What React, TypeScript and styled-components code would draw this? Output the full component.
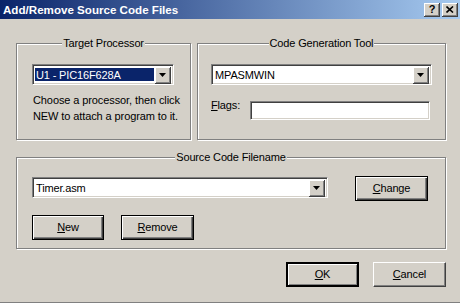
import React from 'react'
import styled, { createGlobalStyle, css } from 'styled-components'

const GlobalStyle = createGlobalStyle`
  html, body {
    margin: 0;
    padding: 0;
    background: #d4d0c8;
  }
  body {
    width: 460px;
    height: 303px;
    overflow: hidden;
    font-family: "Liberation Sans", Arial, sans-serif;
    font-size: 11px;
    color: #000;
  }
`

const Window = styled.div`
  width: 460px;
  height: 303px;
  box-sizing: border-box;
  background: #d4d0c8;
  border-bottom: 1px solid #808080;
  display: flex;
  flex-direction: column;
`

const TitleBar = styled.div`
  height: 19px;
  flex: none;
  display: flex;
  align-items: center;
  justify-content: space-between;
  padding: 0 2px 0 3px;
  background: linear-gradient(to right, #0a246a, #a6caf0);
`

const TitleText = styled.span`
  color: #fff;
  font-weight: bold;
  font-size: 11.6px;
  white-space: nowrap;
`

const TitleButtons = styled.div`
  display: flex;
  gap: 2px;
`

const CaptionButton = styled.div`
  width: 16px;
  height: 14px;
  box-sizing: border-box;
  background: #d4d0c8;
  box-shadow: inset -1px -1px 0 #404040, inset 1px 1px 0 #fff, inset -2px -2px 0 #808080;
  display: flex;
  align-items: center;
  justify-content: center;
  font-weight: bold;
  font-size: 11px;
  line-height: 14px;
  padding-bottom: 1px;
`

const Content = styled.div`
  flex: 1;
  display: flex;
  flex-direction: column;
  padding: 24px 14px 0 16px;
`

const TopRow = styled.div`
  display: grid;
  grid-template-columns: 175px 249px;
  column-gap: 6px;
  height: 97px;
`

const GroupBox = styled.div<{ $height?: number; $top?: number }>`
  box-sizing: border-box;
  border: 1px solid #808080;
  box-shadow: inset 1px 1px 0 #fff, 1px 1px 0 #fff;
  display: flex;
  flex-direction: column;
  margin-top: ${(p) => p.$top || 0}px;
  ${(p) => p.$height && css`height: ${p.$height}px;`}
`

const Caption = styled.span`
  align-self: center;
  margin-top: -7px;
  padding: 0 1px;
  line-height: 13px;
  background: #d4d0c8;
  letter-spacing: -0.15px;
`

const GroupBody = styled.div<{ $pad: string }>`
  display: flex;
  flex-direction: column;
  padding: ${(p) => p.$pad};
`

const sunken = css`
  box-sizing: border-box;
  border-top: 1px solid #808080;
  border-left: 1px solid #808080;
  border-bottom: 1px solid #fff;
  border-right: 1px solid #fff;
  box-shadow: inset 1px 1px 0 #404040, inset -1px -1px 0 #d4d0c8;
  background: #fff;
`

const Combo = styled.div<{ $width: number }>`
  ${sunken}
  width: ${(p) => p.$width}px;
  height: 21px;
  padding: 2px;
  display: flex;
  flex: none;
`

const ComboValue = styled.span<{ $selected?: boolean }>`
  flex: 1;
  display: flex;
  align-items: center;
  padding-left: 1px;
  margin: 1px 1px 1px 0;
  letter-spacing: -0.15px;
  white-space: nowrap;
  ${(p) => p.$selected && css`
    background: #0a246a;
    color: #fff;
  `}
`

const DropButton = styled.span`
  width: 16px;
  height: 17px;
  box-sizing: border-box;
  background: #d4d0c8;
  border-right: 1px solid #404040;
  border-bottom: 1px solid #404040;
  box-shadow: inset 1px 1px 0 #fff, inset -1px -1px 0 #808080;
  display: flex;
  align-items: center;
  justify-content: center;
`

const Hint = styled.p`
  margin: 7px 0 0 1px;
  line-height: 16px;
  letter-spacing: -0.1px;
`

const FieldRow = styled.div`
  display: flex;
  align-items: flex-start;
  margin-top: 16px;
`

const FieldLabel = styled.label`
  width: 39px;
  margin-top: -2px;
  line-height: 13px;
  letter-spacing: -0.15px;
`

const TextInput = styled.div`
  ${sunken}
  width: 180px;
  height: 19px;
`

const ButtonRow = styled.div<{ $gap: number; $justify?: string; $top?: number }>`
  display: flex;
  align-items: flex-start;
  gap: ${(p) => p.$gap}px;
  justify-content: ${(p) => p.$justify || 'flex-start'};
  margin-top: ${(p) => p.$top || 0}px;
`

type Look = 'plain' | 'framed' | 'default'

const Button = styled.button<{ $look?: Look; $width?: number; $lift?: number }>`
  width: ${(p) => p.$width || 73}px;
  height: 25px;
  box-sizing: border-box;
  padding: 0 0 1px;
  margin-top: ${(p) => -(p.$lift || 0)}px;
  background: #d4d0c8;
  font: inherit;
  letter-spacing: -0.15px;
  color: #000;
  flex: none;
  ${(p) =>
    p.$look === 'default'
      ? css`
          border: 2px solid #000;
          box-shadow: inset 1px 1px 0 #fff, inset -1px -1px 0 #808080;
        `
      : p.$look === 'framed'
      ? css`
          border: 1px solid #000;
          box-shadow: inset 1px 1px 0 #fff, inset -1px -1px 0 #404040, inset -2px -2px 0 #808080;
        `
      : css`
          border-top: 1px solid #fff;
          border-left: 1px solid #fff;
          border-right: 1px solid #404040;
          border-bottom: 1px solid #404040;
          box-shadow: inset -1px -1px 0 #808080;
        `}
`

const Arrow = () => (
  <svg width="7" height="4" viewBox="0 0 7 4">
    <polygon points="0,0 7,0 3.5,4" fill="#000" />
  </svg>
)

const CloseGlyph = () => (
  <svg width="8" height="7" viewBox="0 0 8 7">
    <path d="M0.5 0.5 L7 6.5 M7 0.5 L0.5 6.5" stroke="#000" strokeWidth="1.6" />
  </svg>
)

export default function App() {
  return (
    <Window>
      <GlobalStyle />
      <TitleBar>
        <TitleText>Add/Remove Source Code Files</TitleText>
        <TitleButtons>
          <CaptionButton>?</CaptionButton>
          <CaptionButton><CloseGlyph /></CaptionButton>
        </TitleButtons>
      </TitleBar>
      <Content>
        <TopRow>
          <GroupBox>
            <Caption>Target Processor</Caption>
            <GroupBody $pad="14px 0 0 15px">
              <Combo $width={142}>
                <ComboValue $selected>U1 - PIC16F628A</ComboValue>
                <DropButton><Arrow /></DropButton>
              </Combo>
              <Hint>
                Choose a processor, then click
                <br />
                NEW to attach a program to it.
              </Hint>
            </GroupBody>
          </GroupBox>
          <GroupBox>
            <Caption>Code Generation Tool</Caption>
            <GroupBody $pad="14px 0 0 13px">
              <Combo $width={221}>
                <ComboValue>MPASMWIN</ComboValue>
                <DropButton><Arrow /></DropButton>
              </Combo>
              <FieldRow>
                <FieldLabel><u>F</u>lags:</FieldLabel>
                <TextInput />
              </FieldRow>
            </GroupBody>
          </GroupBox>
        </TopRow>
        <GroupBox $height={92} $top={17}>
          <Caption>Source Code Filename</Caption>
          <GroupBody $pad="13px 0 0 15px">
            <ButtonRow $gap={27}>
              <Combo $width={296}>
                <ComboValue>Timer.asm</ComboValue>
                <DropButton><Arrow /></DropButton>
              </Combo>
              <Button $look="framed" $lift={1}><u>C</u>hange</Button>
            </ButtonRow>
            <ButtonRow $gap={17} $top={14}>
              <Button $look="framed" $width={72}><u>N</u>ew</Button>
              <Button $look="framed"><u>R</u>emove</Button>
            </ButtonRow>
          </GroupBody>
        </GroupBox>
        <ButtonRow $gap={14} $justify="flex-end" $top={13}>
          <Button $look="default"><u>O</u>K</Button>
          <Button><u>C</u>ancel</Button>
        </ButtonRow>
      </Content>
    </Window>
  )
}
